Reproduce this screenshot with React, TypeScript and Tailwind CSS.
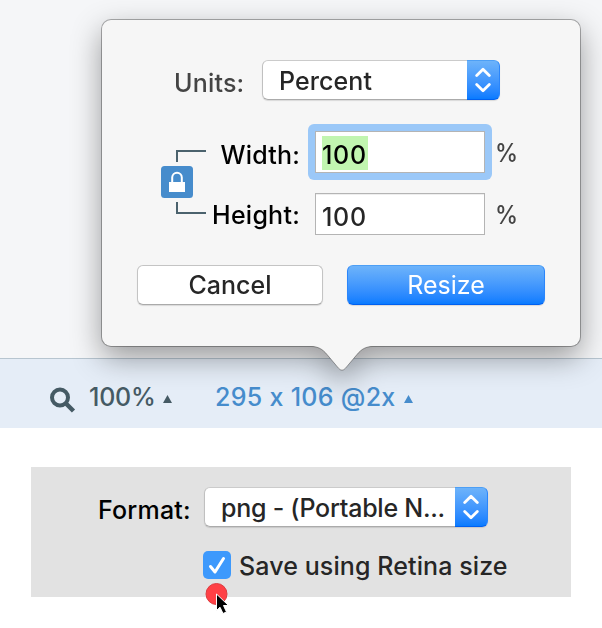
import type { ReactNode } from "react";

function Label({ className = "", children }: { className?: string; children: ReactNode }) {
  return <span className={`block shrink-0 whitespace-pre text-[25px] leading-[30px] ${className}`}>{children}</span>;
}

function Stepper() {
  return (
    <span className="flex h-10 w-[33px] shrink-0 items-center justify-center rounded-r-[6px] border-y border-r border-t-[#4d9ff5] border-r-[#2b86fb] border-b-[#0060f0] bg-linear-to-b from-[#6db3fa] to-[#077bff]">
      <svg width="16" height="26" viewBox="0 0 16 26" fill="none" stroke="white" strokeWidth="2.8" strokeLinecap="round" strokeLinejoin="round">
        <path d="M1.7 8.5 8 2.2l6.300 6.300M1.700 17.500 8 23.800l6.300-6.300" />
      </svg>
    </span>
  );
}

function Select({ className, children }: { className: string; children: ReactNode }) {
  return (
    <div className={`flex h-10 shrink-0 rounded-[6px] shadow-[0_1px_1px_rgba(0,0,0,0.12)] ${className}`}>
      <div className="flex-1 rounded-l-[6px] border-y border-l border-t-[#cbcbcb] border-b-[#ababab] border-l-[#c0c0c0] bg-white pt-[5px] pl-[16px] text-[#262626]">
        {children}
      </div>
      <Stepper />
    </div>
  );
}

function Popover() {
  return (
    <div className="absolute top-[20px] left-[102px] h-[326px] w-[478px] [filter:drop-shadow(0_11px_15px_rgba(0,0,0,0.38))]">
      <div className="h-full rounded-[9px] bg-[#f6f6f6] pt-10 shadow-[0_0_0_1px_rgba(0,0,0,0.3)]">
        <div className="flex h-10 items-start">
          <Label className="mt-2 ml-[72px] w-[88px] tracking-[0.2px] text-[#444]">Units:</Label>
          <Select className="w-[238px]">
            <Label className="tracking-[0.1px]">Percent</Label>
          </Select>
        </div>

        <div className="mt-6 flex h-[112px] items-start">
          <svg className="mt-[26px] ml-[59px] shrink-0" width="46" height="64" viewBox="0 0 46 64">
            <path d="M16 12V1h29M16 52v11h29" fill="none" stroke="#4b626d" strokeWidth="2" />
            <rect y="16" width="32" height="32" rx="3.500" fill="#468ccc" />
            <path d="M11.200 32v-4.500a4.800 4.800 0 0 1 9.600 0V32" fill="none" stroke="white" strokeWidth="2" />
            <rect x="8" y="32" width="16" height="10" fill="white" />
          </svg>
          <div className="flex w-[93px] flex-col items-end gap-[30px] pt-4 text-black">
            <Label className="tracking-[0.2px]">Width:</Label>
            <Label className="tracking-[0.25px]">Height:</Label>
          </div>
          <div className="ml-[8px] flex w-[184px] flex-col">
            <div className="h-14 rounded-[6px] bg-[#9bc8f8] p-[7px]">
              <div className="h-[42px] border border-[#b4b4b4] bg-white pt-1 pl-[6px]">
                <Label className="h-[34px] w-[46px] bg-[#c1f5b0] pt-[4px] tracking-[0.7px] text-black">100</Label>
              </div>
            </div>
            <div className="mx-[7px] mt-[13px] h-[42px] border border-[#b4b4b4] bg-white pt-[8px] pl-[6px] text-[#262626] shadow-[inset_0_1px_0_#eeeeee]">
              <Label className="tracking-[0.7px]">100</Label>
            </div>
          </div>
          <div className="ml-[3px] flex flex-col gap-8 pt-[14px] text-[#444]">
            <Label className="origin-left scale-x-[0.93] font-medium">%</Label>
            <Label className="origin-left scale-x-[0.93] font-medium">%</Label>
          </div>
        </div>

        <div className="mt-[29px] flex gap-6 pl-[35px]">
          <button className="flex h-10 w-[186px] justify-center rounded-[6px] border border-[#c4c4c4] border-b-[#aaa] bg-white pt-[4px] text-[#262626] shadow-[0_1px_1px_rgba(0,0,0,0.12)]">
            <Label>Cancel</Label>
          </button>
          <button className="flex h-10 w-[198px] justify-center rounded-[6px] border border-[#2b86fb] border-t-[#4d9ff5] border-b-[#0060f0] bg-linear-to-b from-[#6db3fa] to-[#077bff] pt-[4px] text-white shadow-[0_1px_1px_rgba(0,0,0,0.12)]">
            <Label className="font-normal">Resize</Label>
          </button>
        </div>
      </div>
      <svg className="absolute top-[325px] left-[204px]" width="72" height="27" viewBox="0 0 72 27">
        <path d="M5 0V1.500C12 1.500 16.500 4 21 9.500L32.500 23.200Q36 27.200 39.500 23.200L51 9.500C55.500 4 60 1.500 67 1.500V0Z" fill="#f6f6f6" />
        <path d="M5 1.500C12 1.500 16.500 4 21 9.500L32.500 23.200Q36 27.200 39.500 23.200L51 9.500C55.500 4 60 1.500 67 1.500" fill="none" stroke="black" strokeOpacity="0.35" />
      </svg>
    </div>
  );
}

function StatusBar() {
  return (
    <div className="flex h-[70px] items-start border-t border-[#b7c5d0] bg-[#e5edf7] pl-[50px]">
      <svg className="mt-[28px] shrink-0" width="26" height="26" viewBox="0 0 26 26" fill="none" stroke="#455a64">
        <circle cx="10" cy="10.500" r="8" strokeWidth="4" />
        <path d="m16 16.500 7.500 7.500" strokeWidth="4.500" />
      </svg>
      <div className="mt-[23px] ml-[13px] flex w-[126px] text-[#455a64]">
        <Label className="w-[74px] tracking-[-0.2px]">100%</Label>
        <Triangle />
      </div>
      <div className="mt-[23px] flex text-[#468ccc]">
        <Label className="w-[189px] tracking-[0.3px]">295 x 106 @2x</Label>
        <Triangle />
      </div>
    </div>
  );
}

function Triangle() {
  return (
    <svg className="mt-[13px]" width="9" height="8" viewBox="0 0 9 8" fill="currentColor">
      <path d="M4.500 0 9 8H0Z" />
    </svg>
  );
}

function FormatPanel() {
  return (
    <div className="mt-[39px] ml-[31px] h-[130px] w-[540px] bg-[#e2e2e2] pt-5">
      <div className="flex h-10 items-start">
        <Label className="mt-2 ml-[67px] w-[106px] tracking-[0.2px] text-black">Format:</Label>
        <Select className="w-[284px]">
          <Label className="tracking-[-0.25px]">png - (Portable N...</Label>
        </Select>
      </div>
      <div className="relative mt-6 flex pl-[172px]">
        <span className="flex size-7 items-center justify-center rounded-[5px] bg-[#3d99fc]">
          <svg width="18" height="19" viewBox="0 0 18 19" fill="none" stroke="white" strokeWidth="3" strokeLinecap="round" strokeLinejoin="round">
            <path d="m2.500 10.500 4.500 5.500L15.500 2.500" />
          </svg>
        </span>
        <Label className="ml-2 tracking-[0.1px] text-[#262626]">Save using Retina size</Label>
        <svg className="absolute top-[31px] left-[173px]" width="26" height="32" viewBox="0 0 26 32">
          <circle cx="12.500" cy="12" r="10.500" fill="#ff4045" stroke="#dc3c40" />
          <path d="M12.500 12v16.500l3.500-3.300 3 6.300 3.500-1.500-3-6.500h5Z" fill="black" stroke="white" strokeWidth="1" />
        </svg>
      </div>
    </div>
  );
}

export default function App() {
  return (
    <div className="relative h-[628px] w-[602px] overflow-hidden bg-white font-['Inter',sans-serif] font-[450] [font-feature-settings:'calt'_0]">
      <div className="h-[358px] bg-[#f5f6f8]" />
      <StatusBar />
      <FormatPanel />
      <Popover />
    </div>
  );
}
